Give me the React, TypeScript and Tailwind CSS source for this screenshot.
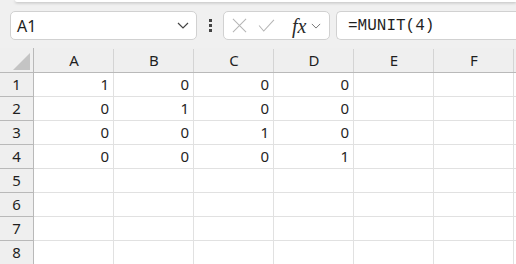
import React from "react";

const cols = ["A", "B", "C", "D", "E", "F"];
const data: (number | null)[][] = [
  [1, 0, 0, 0],
  [0, 1, 0, 0],
  [0, 0, 1, 0],
  [0, 0, 0, 1],
  [],
  [],
  [],
  [],
];

const uiFont = { fontFamily: '"Segoe UI", "Noto Sans", "Open Sans", sans-serif' };

function Chevron({ className }: { className?: string }) {
  return (
    <svg viewBox="0 0 12 7" className={className} fill="none" stroke="currentColor" strokeWidth="1.2">
      <path d="M1 1l5 5 5-5" />
    </svg>
  );
}

export default function App() {
  return (
    <div className="w-[516px] h-[264px] overflow-hidden bg-[#f0f0f0] text-[#1f1f1f]" style={uiFont}>
      {/* ribbon edge */}
      <div className="ml-[15px] h-[2px] bg-white rounded-bl-[4px] shadow-[0_1px_3px_rgba(0,0,0,0.25)]" />

      {/* formula bar */}
      <div className="flex items-center h-[29px] mt-[9px] mb-[8px] pl-[10px]">
        <div className="flex items-center justify-between w-[187px] h-[29px] bg-white border border-[#d1d1d1] rounded-[5px] pl-[6px] pr-[7px]">
          <span className="text-[16px]">A1</span>
          <Chevron className="w-[12px] h-[7px] text-[#444]" />
        </div>
        <div className="flex flex-col gap-[2px] w-[26px] items-center">
          <span className="w-[3px] h-[3px] bg-[#444]" />
          <span className="w-[3px] h-[3px] bg-[#444]" />
          <span className="w-[3px] h-[3px] bg-[#444]" />
        </div>
        <div className="flex items-center w-[107px] h-[29px] bg-white border border-[#d1d1d1] rounded-[5px] pl-[8px]">
          <svg viewBox="0 0 16 16" className="w-[15px] h-[15px] text-[#b5b5b5]" fill="none" stroke="currentColor" strokeWidth="1.1">
            <path d="M1 1l14 14M15 1L1 15" />
          </svg>
          <svg viewBox="0 0 18 14" className="w-[17px] h-[13px] ml-[11px] text-[#b5b5b5]" fill="none" stroke="currentColor" strokeWidth="1.1">
            <path d="M1 7l5 6L17 1" />
          </svg>
          <span
            className="ml-[17px] text-[20px] italic leading-none text-[#2a2a2a]"
            style={{ fontFamily: '"Liberation Serif", "DejaVu Serif", serif' }}
          >
            fx
          </span>
          <Chevron className="w-[10px] h-[6px] ml-[5px] text-[#777]" />
        </div>
        <div className="flex-1 h-[29px] ml-[6px] bg-white border border-r-0 border-[#d1d1d1] rounded-l-[5px] flex items-center pl-[11px]">
          <span className="text-[16px]" style={{ fontFamily: '"Liberation Mono", "DejaVu Sans Mono", monospace' }}>
            =MUNIT(4)
          </span>
        </div>
      </div>

      {/* grid */}
      <div className="grid grid-cols-[34px_repeat(6,80px)_1fr] text-[15px]">
        <div className="h-[25px] bg-[#efefef] border-r border-b border-[#b9b9b9] relative">
          <svg viewBox="0 0 10 10" className="absolute right-[3px] bottom-[2px] w-[17px] h-[17px]">
            <path d="M10 0L10 10L0 10Z" fill="#c4c4c4" />
          </svg>
        </div>
        {cols.map((c) => (
          <div
            key={c}
            className="h-[25px] bg-[#efefef] border-b border-[#b9b9b9] flex items-center justify-center relative"
          >
            <span className="leading-none">{c}</span>
            <span className="absolute right-0 top-[1px] bottom-0 w-px bg-[#d4d4d4]" />
          </div>
        ))}
        <div className="h-[25px] bg-[#efefef] border-b border-[#b9b9b9]" />

        {data.map((row, r) => (
          <React.Fragment key={r}>
            <div className="h-[24px] bg-[#efefef] border-r border-b border-[#b9b9b9] flex items-center justify-center">
              <span className="leading-none">{r + 1}</span>
            </div>
            {cols.map((c, ci) => (
              <div
                key={c}
                className="h-[24px] bg-white border-r border-b border-[#e1e1e1] flex items-center justify-end pr-[4px]"
              >
                <span className="leading-none">{row[ci] ?? ""}</span>
              </div>
            ))}
            <div className="h-[24px] bg-white border-b border-[#e1e1e1]" />
          </React.Fragment>
        ))}
      </div>
    </div>
  );
}
